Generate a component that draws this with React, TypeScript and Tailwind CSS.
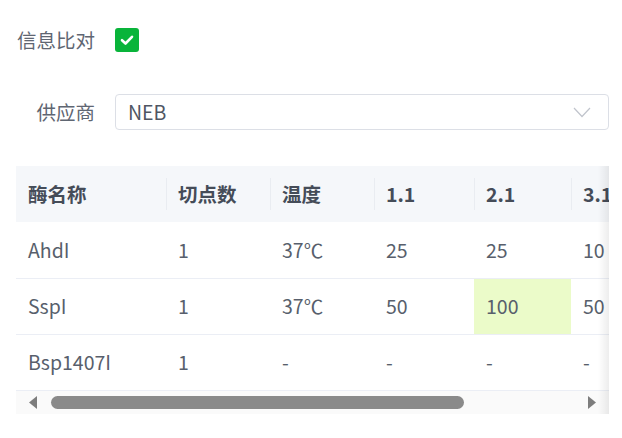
import React from 'react';

const FONT = { fontFamily: '"Noto Sans CJK SC", "Noto Sans", sans-serif' };

type Row = { name: string; cuts: string; temp: string; v: string[]; hi?: number };

const ROWS: Row[] = [
  { name: 'AhdI', cuts: '1', temp: '37℃', v: ['25', '25', '10'] },
  { name: 'SspI', cuts: '1', temp: '37℃', v: ['50', '100', '50'], hi: 1 },
  { name: 'Bsp1407I', cuts: '1', temp: '-', v: ['-', '-', '-'] },
];

const HEAD = ['酶名称', '切点数', '温度', '1.1', '2.1', '3.1'];
const WIDTHS = ['w-[150px]', 'w-[104px]', 'w-[104px]', 'w-[100px]', 'w-[97px]', 'w-[97px]'];

export default function App() {
  return (
    <div className="w-[622px] h-[438px] bg-white pl-4 pr-[13px] pt-[28px] text-[19.5px]" style={FONT}>
      <div className="flex items-center h-6">
        <div className="w-[79px] text-right text-[#5f6672] leading-none">信息比对</div>
        <div className="ml-5 w-6 h-6 rounded-[3px] bg-[#09b43a] flex items-center justify-center">
          <svg width="16" height="16" viewBox="0 0 16 16" fill="none">
            <path d="M3 8.2 L6.5 11.5 L13 4.8" stroke="white" strokeWidth="2.6" strokeLinecap="round" strokeLinejoin="round" />
          </svg>
        </div>
      </div>

      <div className="flex items-center mt-[42px]">
        <div className="w-[79px] text-right text-[#5f6672] leading-none">供应商</div>
        <div className="ml-5 flex-1 h-9 border border-[#dcdfe6] rounded-[4px] flex items-center justify-between pl-3 pr-[17px]">
          <span className="text-[#4f5663] leading-none">NEB</span>
          <svg width="18" height="11" viewBox="0 0 18 11" fill="none">
            <path d="M1 1 L9 9.5 L17 1" stroke="#c0c4cc" strokeWidth="1.2" />
          </svg>
        </div>
      </div>

      <div className="relative mt-9 w-[593px] overflow-hidden">
        <table className="table-fixed border-collapse w-[652px]">
          <colgroup>
            {WIDTHS.map((w, i) => (
              <col key={i} className={w} />
            ))}
          </colgroup>
          <thead>
            <tr className="h-14 bg-[#f5f7fa]">
              {HEAD.map((h, i) => (
                <th key={h} className="relative text-left font-bold text-[#454c58] pl-3 whitespace-nowrap">
                  {i > 0 && <span className="absolute left-0 top-3 bottom-3 w-px bg-[#e9ecf1]" />}
                  {h}
                </th>
              ))}
            </tr>
          </thead>
          <tbody>
            {ROWS.map((r) => (
              <tr key={r.name} className="h-14 border-b border-[#ebeef5] text-[#585f6c]">
                <td className="pl-3 whitespace-nowrap">{r.name}</td>
                <td className="pl-3">{r.cuts}</td>
                <td className="pl-3">{r.temp}</td>
                {r.v.map((v, j) => (
                  <td key={j} className={`pl-3 ${r.hi === j ? 'bg-[#ebfbc9]' : ''}`}>
                    {v}
                  </td>
                ))}
              </tr>
            ))}
          </tbody>
        </table>

        <div className="h-[23px] bg-[#fafafa] flex items-center pl-[13px] pr-[13px]">
          <svg width="8" height="13" viewBox="0 0 8 13">
            <path d="M8 0 L0 6.5 L8 13 Z" fill="#7d7d7d" />
          </svg>
          <div className="ml-[14px] w-[413px] h-[13px] rounded-full bg-[#8a8a8a]" />
          <div className="flex-1" />
          <svg width="8" height="13" viewBox="0 0 8 13">
            <path d="M0 0 L8 6.5 L0 13 Z" fill="#7d7d7d" />
          </svg>
        </div>

        <div className="pointer-events-none absolute right-0 top-0 bottom-0 w-[11px] bg-linear-to-l from-[rgba(0,0,0,0.07)] to-transparent" />
      </div>
    </div>
  );
}
